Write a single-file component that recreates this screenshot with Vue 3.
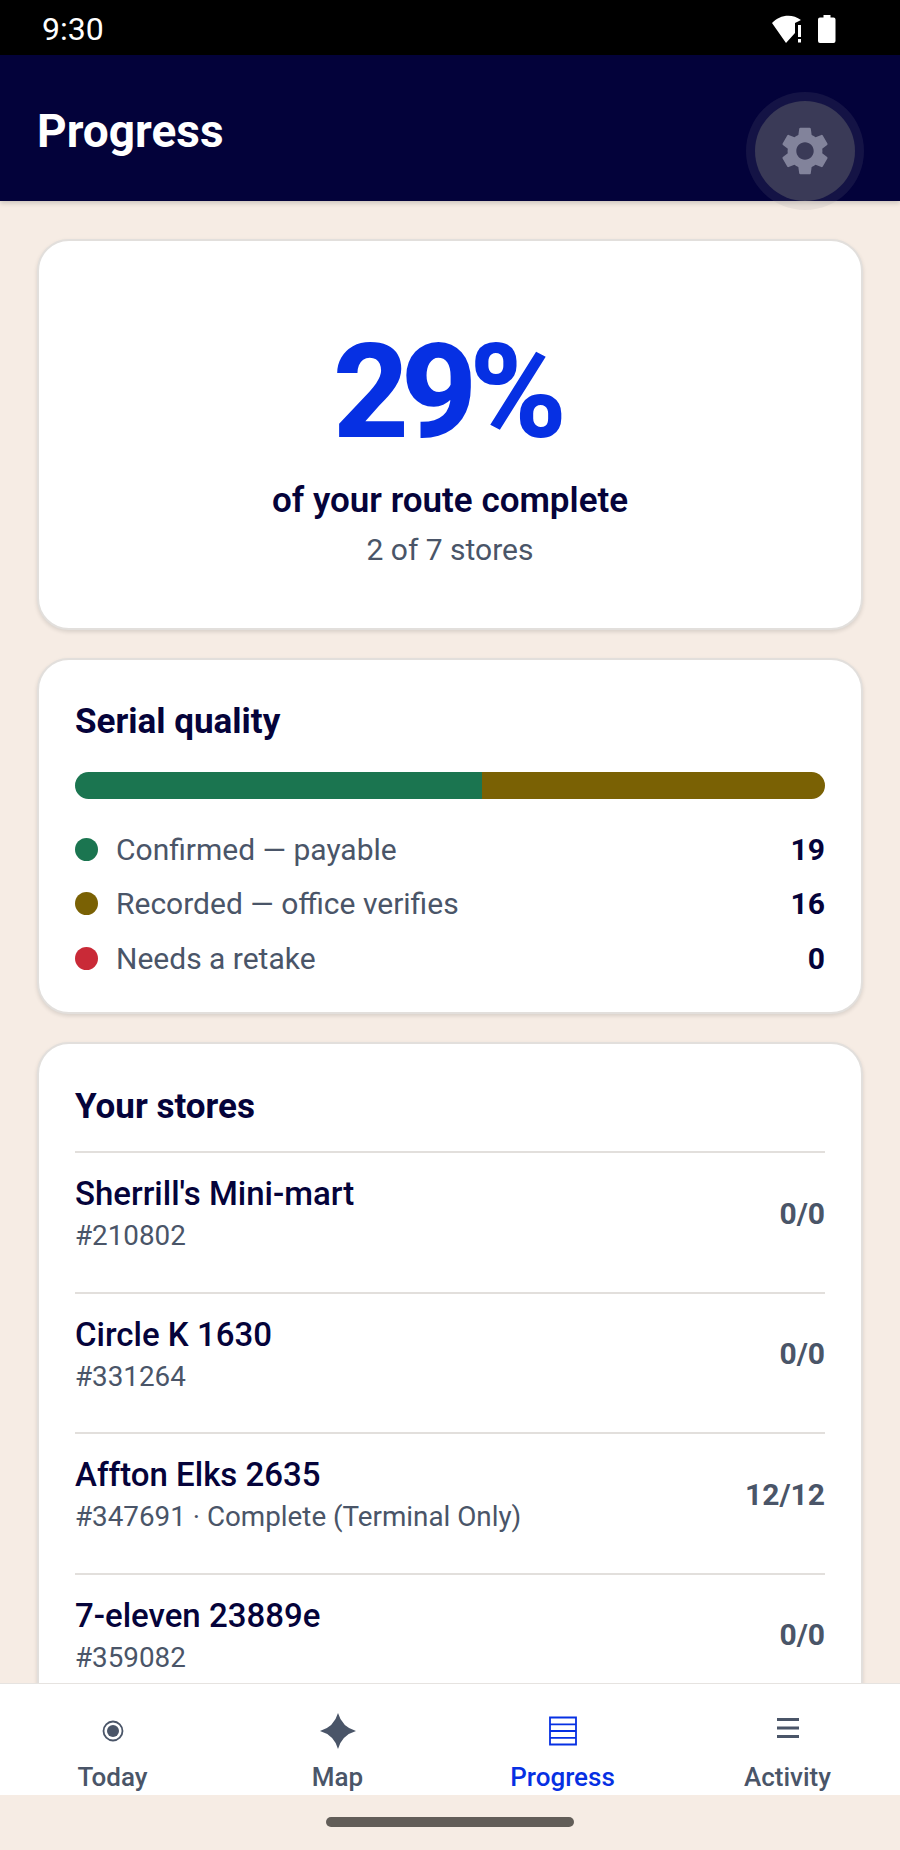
<script setup>
const legend = [
  { label: 'Confirmed — payable', value: 19, color: '#1b7550' },
  { label: 'Recorded — office verifies', value: 16, color: '#7a6104' },
  { label: 'Needs a retake', value: 0, color: '#c92a37' },
];

const stores = [
  { name: "Sherrill's Mini-mart", sub: '#210802', count: '0/0' },
  { name: 'Circle K 1630', sub: '#331264', count: '0/0' },
  { name: 'Affton Elks 2635', sub: '#347691 · Complete (Terminal Only)', count: '12/12' },
  { name: '7-eleven 23889e', sub: '#359082', count: '0/0' },
];
</script>

<template>
  <div class="screen">
    <div class="status-bar">
      <span class="clock">9:30</span>
      <div class="status-icons">
        <svg width="34" height="30" viewBox="0 0 34 30">
          <path d="M0 9 C7 1 20 -1 29 6 L23 9 L23 19 L14 29 Z" fill="#fff" />
          <rect x="26" y="11" width="3" height="12" fill="#fff" />
          <rect x="26" y="25" width="3" height="3.5" fill="#fff" />
        </svg>
        <svg width="18" height="30" viewBox="0 0 18 30">
          <path d="M5.5 1 h7 v2.5 h3 a2 2 0 0 1 2 2 V27 a2 2 0 0 1 -2 2 H2 a2 2 0 0 1 -2 -2 V5.500 a2 2 0 0 1 2 -2 h3.500 z" fill="#fff" />
        </svg>
      </div>
    </div>

    <header class="app-header">
      <h1>Progress</h1>
    </header>

    <button class="settings-btn" aria-label="Settings">
      <svg width="58" height="58" viewBox="0 0 24 24">
        <path fill="#82839b" d="M19.14 12.94c.04-.3.06-.61.06-.94 0-.32-.02-.64-.07-.94l2.03-1.58a.49.49 0 0 0 .12-.61l-1.92-3.32a.488.488 0 0 0-.59-.22l-2.39.96c-.5-.38-1.03-.7-1.62-.94l-.36-2.54a.484.484 0 0 0-.48-.41h-3.84c-.24 0-.43.17-.47.41l-.36 2.54c-.59.24-1.13.57-1.62.94l-2.39-.96c-.22-.08-.47 0-.59.22L2.74 8.87c-.12.21-.08.47.12.61l2.03 1.58c-.05.3-.09.63-.09.94s.02.64.07.94l-2.03 1.58a.49.49 0 0 0-.12.61l1.92 3.32c.12.22.37.29.59.22l2.39-.96c.5.38 1.03.7 1.62.94l.36 2.54c.05.24.24.41.48.41h3.84c.24 0 .44-.17.47-.41l.36-2.54c.59-.24 1.13-.56 1.62-.94l2.39.96c.22.08.47 0 .59-.22l1.92-3.32c.12-.22.07-.47-.12-.61l-2.01-1.58zM12 15.600c-1.980 0-3.600-1.620-3.600-3.600s1.620-3.600 3.600-3.600 3.600 1.620 3.600 3.600-1.620 3.600-3.600 3.600z" />
      </svg>
    </button>

    <main class="content">
      <section class="card hero">
        <div class="percent">29%</div>
        <div class="hero-title">of your route complete</div>
        <div class="hero-sub">2 of 7 stores</div>
      </section>

      <section class="card quality">
        <h2>Serial quality</h2>
        <div class="bar">
          <div class="bar-part" :style="{ flexGrow: 19, background: legend[0].color }"></div>
          <div class="bar-part" :style="{ flexGrow: 16, background: legend[1].color }"></div>
        </div>
        <div class="legend">
          <div v-for="item in legend" :key="item.label" class="legend-row">
            <span class="dot" :style="{ background: item.color }"></span>
            <span class="legend-label">{{ item.label }}</span>
            <span class="legend-value">{{ item.value }}</span>
          </div>
        </div>
      </section>

      <section class="card stores">
        <h2>Your stores</h2>
        <div v-for="store in stores" :key="store.sub" class="store-row">
          <div>
            <div class="store-name">{{ store.name }}</div>
            <div class="store-sub">{{ store.sub }}</div>
          </div>
          <span class="store-count">{{ store.count }}</span>
        </div>
      </section>
    </main>

    <nav class="tabs">
      <div class="tab">
        <svg width="40" height="40" viewBox="0 0 40 40">
          <circle cx="20" cy="20" r="9.500" fill="none" stroke="#4a5568" stroke-width="1.800" />
          <circle cx="20" cy="20" r="6" fill="#4a5568" />
        </svg>
        <span>Today</span>
      </div>
      <div class="tab">
        <svg width="40" height="40" viewBox="0 0 40 40">
          <path d="M20 2 Q24 16 38 20 Q24 24 20 38 Q16 24 2 20 Q16 16 20 2 Z" fill="#4a5568" />
        </svg>
        <span>Map</span>
      </div>
      <div class="tab active">
        <svg width="40" height="40" viewBox="0 0 40 40">
          <path d="M7 6.500 H33 V33.500 H7 Z M7 13.300 H33 M7 20 H33 M7 26.800 H33" fill="none" stroke="#0630e3" stroke-width="1.800" />
        </svg>
        <span>Progress</span>
      </div>
      <div class="tab">
        <svg width="40" height="40" viewBox="0 0 40 40">
          <path d="M9 8.500 H31 M9 17 H31 M9 25.500 H31" fill="none" stroke="#4a5568" stroke-width="3" />
        </svg>
        <span>Activity</span>
      </div>
    </nav>

    <div class="gesture-area">
      <div class="gesture-pill"></div>
    </div>
  </div>
</template>

<style scoped>
.screen {
  position: relative;
  display: flex;
  flex-direction: column;
  width: 900px;
  height: 1850px;
  overflow: hidden;
  background: #f6ece4;
  font-family: Roboto, "Liberation Sans", sans-serif;
  color: #05033a;
}

.status-bar {
  flex: none;
  display: flex;
  align-items: center;
  justify-content: space-between;
  height: 55px;
  padding: 2px 64px 0 42px;
  box-sizing: border-box;
  background: #000;
  color: #fff;
}

.clock {
  font-size: 32px;
}

.status-icons {
  display: flex;
  align-items: center;
  gap: 12px;
}

.status-icons svg {
  display: block;
}

.app-header {
  flex: none;
  height: 146px;
  background: #03023a;
  box-shadow: 0 2px 5px rgba(0, 0, 0, 0.18);
  position: relative;
  z-index: 1;
}

.app-header h1 {
  margin: 0;
  padding: 51px 0 0 37px;
  font-size: 46px;
  line-height: 50px;
  font-weight: 700;
  color: #fff;
}

.settings-btn {
  position: absolute;
  z-index: 2;
  top: 101px;
  left: 755px;
  width: 100px;
  height: 100px;
  padding: 0;
  border: none;
  border-radius: 50%;
  background: #3a3a57;
  box-shadow: 0 0 0 9px rgba(140, 140, 150, 0.13);
  display: flex;
  align-items: center;
  justify-content: center;
}

.content {
  flex: 1;
  min-height: 0;
  overflow: hidden;
  padding: 38px 37px 0;
  display: flex;
  flex-direction: column;
  gap: 28px;
}

.card {
  flex: none;
  background: #fff;
  border: 2px solid #e2dfdc;
  border-radius: 32px;
  box-shadow: 0 2px 4px rgba(0, 0, 0, 0.12);
  box-sizing: border-box;
}

.hero {
  height: 391px;
  padding-top: 89px;
  text-align: center;
}

.percent {
  padding-right: 8px;
  font-size: 132px;
  line-height: 124px;
  font-weight: 800;
  letter-spacing: -8px;
  color: #0630e3;
}

.hero-title {
  margin-top: 25px;
  font-size: 35px;
  line-height: 44px;
  font-weight: 600;
}

.hero-sub {
  margin-top: 9px;
  font-size: 30px;
  line-height: 36px;
  color: #4a5568;
}

h2 {
  margin: 0;
  font-size: 35px;
  line-height: 44px;
  font-weight: 700;
}

.quality {
  height: 356px;
  padding: 40px 36px 0;
}

.bar {
  display: flex;
  height: 27px;
  margin-top: 28px;
  border-radius: 14px;
  overflow: hidden;
}

.bar-part {
  flex-basis: 0;
}

.legend {
  margin-top: 23px;
}

.legend-row {
  display: flex;
  align-items: center;
  height: 54.500px;
  font-size: 30px;
}

.dot {
  flex: none;
  width: 23px;
  height: 23px;
  border-radius: 50%;
  margin-right: 18px;
}

.legend-label {
  flex: 1;
  color: #4a5568;
}

.legend-value {
  font-weight: 700;
}

.stores {
  padding: 41px 36px 0;
}

.stores h2 {
  padding-bottom: 22px;
}

.store-row {
  display: flex;
  align-items: center;
  justify-content: space-between;
  height: 140.500px;
  padding-bottom: 16px;
  border-top: 2px solid #e2dfdc;
  box-sizing: border-box;
}

.store-name {
  font-size: 33px;
  line-height: 42px;
  font-weight: 500;
}

.store-sub {
  margin-top: 2px;
  font-size: 27.800px;
  line-height: 38px;
  color: #4a5568;
}

.store-count {
  margin-bottom: 2px;
  font-size: 30px;
  font-weight: 700;
  color: #4a5568;
}

.tabs {
  flex: none;
  display: grid;
  grid-template-columns: repeat(4, 1fr);
  height: 112px;
  background: #fff;
  border-top: 1px solid #e6e3e0;
  box-sizing: border-box;
  position: relative;
}

.tab {
  display: flex;
  flex-direction: column;
  align-items: center;
  padding-top: 27px;
  font-size: 26px;
  font-weight: 500;
  line-height: 30px;
  color: #4a5568;
}

.tab svg {
  display: block;
  margin-bottom: 11px;
}

.tab.active {
  color: #0630e3;
}

.gesture-area {
  flex: none;
  height: 55px;
  display: flex;
  justify-content: center;
  padding-top: 22px;
  box-sizing: border-box;
}

.gesture-pill {
  width: 248px;
  height: 10px;
  border-radius: 5px;
  background: #625d58;
}
</style>
